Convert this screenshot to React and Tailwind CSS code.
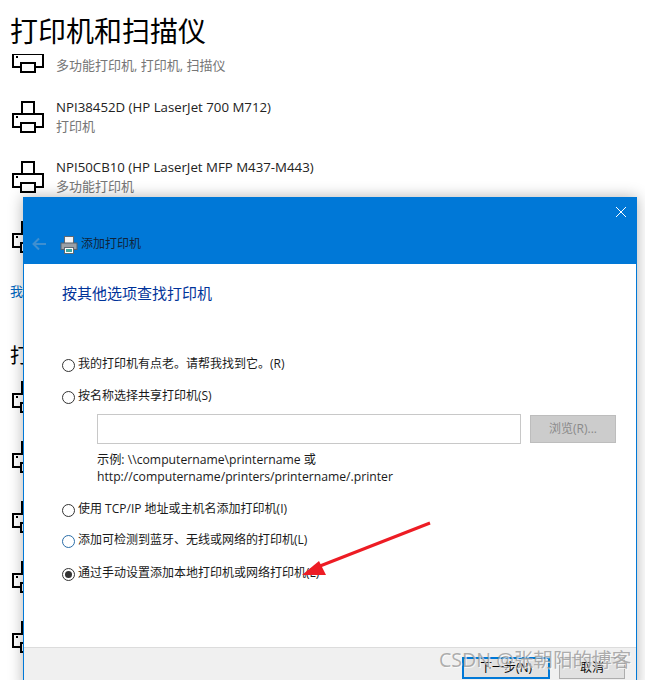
const PrinterIcon = ({ className = '' }) => (
  <svg width="32" height="32" viewBox="0 0 32 32" fill="none" stroke="#000" strokeWidth="2" className={className}>
    <path d="M10 13V1h12v12" />
    <path d="M9 26H1V13h30v13h-8" />
    <path d="M9 22h14v9H9z" />
    <rect x="4" y="15" width="2" height="2" fill="#000" stroke="none" />
  </svg>
);

const SmallPrinter = () => (
  <svg width="18" height="18" viewBox="0 0 18 18">
    <rect x="4.5" y="0.5" width="9" height="7" fill="#f4f4f4" stroke="#5f6873" />
    <rect x="1" y="7" width="16" height="6.5" fill="#9aa0a6" stroke="#56606b" />
    <rect x="4.5" y="11.5" width="9" height="6" fill="#fff" stroke="#5f6873" />
    <rect x="6" y="13" width="6" height="3" fill="#3fa7a0" />
  </svg>
);

const Radio = ({ checked, hover }) => (
  <span className={`flex h-[13px] w-[13px] shrink-0 translate-y-[1px] items-center justify-center rounded-full border ${hover ? 'border-[#2a6da8]' : 'border-[#333]'}`}>
    {checked && <span className="h-[7px] w-[7px] rounded-full bg-[#333]" />}
  </span>
);

const Option = ({ children, checked, hover, className = '' }) => (
  <div className={`flex items-center gap-[3px] text-[12px] leading-[16px] text-[#1a1a1a] ${className}`}>
    <Radio checked={checked} hover={hover} />
    <span>{children}</span>
  </div>
);

const bgPrinters = [
  { top: 'NPI38452D (HP LaserJet 700 M712)', sub: '打印机' },
  { top: 'NPI50CB10 (HP LaserJet MFP M437-M443)', sub: '多功能打印机' },
];

export default function App() {
  return (
    <div className="relative h-[680px] w-[645px] overflow-hidden bg-white font-['Open_Sans','Noto_Sans_CJK_SC',sans-serif]">
      {/* settings page behind the dialog */}
      <div className="pl-[12px]">
        <h1 className="-ml-[2px] h-[54px] pt-[12px] text-[28px] leading-[38px] text-black">打印机和扫描仪</h1>
        <div className="flex h-[19px] items-end gap-[12px] overflow-hidden">
          <PrinterIcon className="shrink-0" />
          <div className="text-[13px] leading-[16px] text-[#767676]">多功能打印机, 打印机, 扫描仪</div>
        </div>
        {bgPrinters.map(p => (
          <div key={p.top} className="mt-[28px] flex h-[32px] items-center gap-[12px]">
            <PrinterIcon className="shrink-0" />
            <div>
              <div className="text-[13.25px] leading-[19px] text-[#222]">{p.top}</div>
              <div className="text-[13px] leading-[19px] text-[#767676]">{p.sub}</div>
            </div>
          </div>
        ))}
        <div className="mt-[28px]"><PrinterIcon /></div>
        <div className="-ml-[2px] mt-[29px] text-[13px] leading-[18px] text-[#0067c0]">我</div>
        <div className="-ml-[2px] mt-[43px] text-[20px] leading-[26px] text-black">打</div>
        <div className="mt-[12px] flex flex-col gap-[28px]">
          <PrinterIcon />
          <PrinterIcon />
          <PrinterIcon />
          <PrinterIcon />
          <PrinterIcon />
        </div>
      </div>

      {/* add printer dialog */}
      <div className="absolute left-[23px] top-[197px] flex h-[493px] w-[614px] flex-col border-x border-[#0078d7] bg-white shadow-[0_0_14px_rgba(0,0,0,0.3)]">
        <div className="relative -mx-px flex h-[67px] shrink-0 items-end bg-[#0078d7] pb-[10px] pl-[9px]">
          <svg width="14" height="14" viewBox="0 0 14 14" fill="none" stroke="#3f8fd0" strokeWidth="2" className="mb-[3px]">
            <path d="M14 7H2M7 1.5 1.5 7 7 12.5" />
          </svg>
          <div className="ml-[14px]"><SmallPrinter /></div>
          <span className="ml-[3px] text-[12px] leading-[20px] text-[#10243a]">添加打印机</span>
          <svg width="12" height="12" viewBox="0 0 12 12" stroke="#fff" strokeWidth="1" className="absolute right-[10px] top-[9px]">
            <path d="M1 1l10 10M11 1 1 11" />
          </svg>
        </div>

        <div className="flex flex-1 flex-col pl-[38px]">
          <h2 className="mt-[17px] text-[15px] leading-[24px] text-[#003399]">按其他选项查找打印机</h2>
          <Option className="mt-[51px]">我的打印机有点老。请帮我找到它。(R)</Option>
          <Option className="mt-[16px]">按名称选择共享打印机(S)</Option>
          <div className="mt-[10px] ml-[35px] flex items-center gap-[9px]">
            <div className="h-[30px] w-[424px] border border-[#c8c8c8] bg-white" />
            <div className="flex h-[28px] w-[86px] items-center justify-center border border-[#bdbdbd] bg-[#cccccc] text-[12px] text-[#8a8a8a]">浏览(R)...</div>
          </div>
          <div className="mt-[7px] ml-[35px] text-[12.2px] leading-[17px] text-[#1a1a1a]">
            <div>示例: \\computername\printername 或</div>
            <div>http://computername/printers/printername/.printer</div>
          </div>
          <Option className="mt-[16px]">使用 TCP/IP 地址或主机名添加打印机(I)</Option>
          <Option hover className="mt-[15px]">添加可检测到蓝牙、无线或网络的打印机(L)</Option>
          <Option checked className="mt-[17px]">通过手动设置添加本地打印机或网络打印机(L)</Option>
        </div>

        <div className="flex h-[43px] shrink-0 items-start justify-end gap-[9px] border-t border-[#dcdcdc] bg-[#f0f0f0] pr-[11px] pt-[9px]">
          <div className="flex h-[22px] w-[88px] items-center justify-center border-2 border-[#0078d7] bg-[#e1e1e1] text-[12px] text-black">下一步(N)</div>
          <div className="flex h-[22px] w-[66px] items-center justify-center border border-[#adadad] bg-[#e1e1e1] text-[12px] text-black">取消</div>
        </div>
      </div>

      {/* annotation arrow */}
      <svg width="645" height="680" className="pointer-events-none absolute left-0 top-0">
        <path d="M430 523 320 566" stroke="#ed1c24" strokeWidth="3" fill="none" />
        <path d="M302 575 319 561 326 575z" fill="#ed1c24" />
      </svg>

      {/* watermark */}
      <div className="absolute left-[439px] top-[647px] text-[19.6px] leading-[26px] text-[#9a9a9a]/80 [text-shadow:1px_1px_0_rgba(255,255,255,0.7)]">CSDN @张朝阳的博客</div>
    </div>
  );
}
